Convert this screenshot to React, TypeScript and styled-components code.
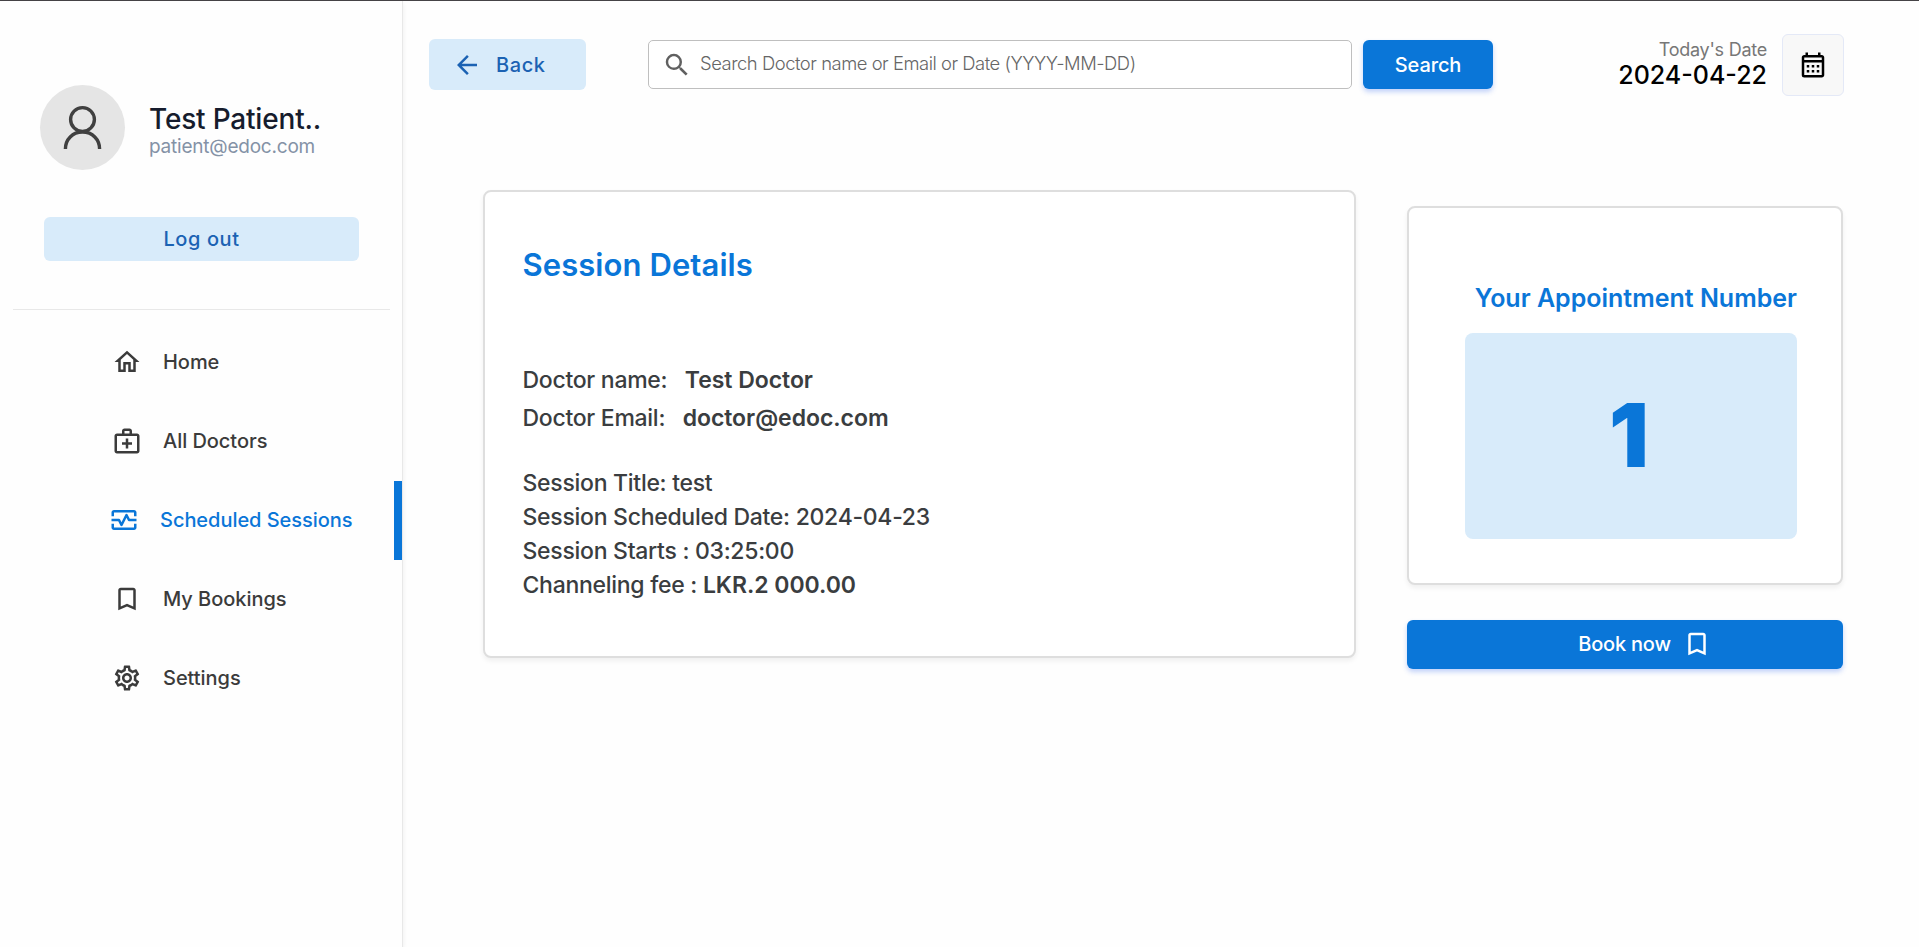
import React from "react";
import styled, { createGlobalStyle } from "styled-components";
import {
  MdArrowBack,
  MdBookmarkBorder,
  MdOutlineCalendarMonth,
  MdOutlineHome,
  MdOutlineMedicalServices,
  MdOutlineMonitorHeart,
  MdOutlineSettings,
  MdSearch,
} from "react-icons/md";

const GlobalStyle = createGlobalStyle`
  *, *::before, *::after { box-sizing: border-box; }
  body {
    margin: 0;
    background: #fff;
    font-family: Inter, "Liberation Sans", sans-serif;
    overflow: hidden;
  }
  h1, h2, p { margin: 0; font-weight: inherit; }
  button, input { font-family: inherit; }
`;

const Page = styled.div`
  display: flex;
  height: 947px;
  border-top: 1px solid #454346;
  background: #fefefe;
`;

const Sidebar = styled.aside`
  width: 403px;
  flex: none;
  display: flex;
  flex-direction: column;
  border-right: 1px solid #e8e8e8;
  box-shadow: 0 3px 5px rgba(0, 0, 0, 0.07);
`;

const Profile = styled.div`
  display: flex;
  align-items: center;
  gap: 24px;
  height: 85px;
  margin: 84px 0 0 40px;
`;

const Avatar = styled.div`
  width: 85px;
  height: 85px;
  border-radius: 50%;
  background: #e5e5e5;
`;

const ProfileText = styled.div`
  padding-top: 7px;
`;

const ProfileName = styled.p`
  font-size: 28px;
  font-weight: 500;
  line-height: 30px;
  letter-spacing: -0.19px;
  color: #161c2d;
`;

const ProfileEmail = styled.p`
  font-size: 19px;
  font-weight: 400;
  line-height: 25px;
  letter-spacing: -0.22px;
  color: #8492a6;
`;

const SoftButton = styled.button`
  display: flex;
  align-items: center;
  justify-content: center;
  border: 0;
  padding: 0;
  border-radius: 6px;
  background: #d8ebfa;
  color: #1b62b3;
  font-size: 20px;
  font-weight: 500;
  letter-spacing: 0.6px;
`;

const LogoutButton = styled(SoftButton)`
  width: 315px;
  height: 44px;
  margin: 47px 0 0 44px;
`;

const Divider = styled.div`
  height: 1px;
  margin: 48px 12px 13px 13px;
  background: #e8e8e8;
`;

const NavItem = styled.a<{ $active?: boolean }>`
  display: flex;
  align-items: center;
  gap: 21px;
  height: 79px;
  padding: 0 0 1px ${(p) => (p.$active ? 109 : 112)}px;
  border-right: ${(p) => (p.$active ? "8px solid #0a76d8" : "0")};
  color: ${(p) => (p.$active ? "#0a76d8" : "#3b3b3b")};
  font-size: 20px;
  font-weight: 500;
  letter-spacing: -0.04px;
  svg { flex: none; }
`;

const Main = styled.main`
  flex: 1;
  min-width: 0;
`;

const Header = styled.header`
  display: flex;
  align-items: flex-start;
  height: 62px;
  margin-top: 33px;
  padding-left: 26px;
`;

const BackButton = styled(SoftButton)`
  width: 157px;
  height: 51px;
  margin-top: 5px;
  justify-content: flex-start;
  gap: 14px;
  padding-left: 23px;
`;

const SearchBox = styled.label`
  display: flex;
  align-items: center;
  gap: 8px;
  width: 704px;
  height: 49px;
  margin: 6px 0 0 62px;
  padding-left: 13px;
  border: 1px solid #bfbfbf;
  border-radius: 5px;
  background: #fff;
  color: #606060;
`;

const SearchInput = styled.input`
  flex: 1;
  height: 45px;
  padding: 0 0 3px;
  border: 0;
  outline: 0;
  background: none;
  font-size: 18.4px;
  font-weight: 300;
  letter-spacing: -0.46px;
  &::placeholder { color: #666; opacity: 1; }
`;

const PrimaryButton = styled.button`
  display: flex;
  align-items: center;
  justify-content: center;
  height: 49px;
  padding: 0;
  border: 0;
  border-radius: 6px;
  background: #0a76d8;
  box-shadow: 0 3px 5px 0 rgba(57, 108, 240, 0.3);
  color: #fff;
  font-size: 20px;
  font-weight: 500;
`;

const SearchButton = styled(PrimaryButton)`
  width: 130px;
  margin: 6px 0 0 11px;
  padding-top: 1px;
  letter-spacing: -0.1px;
`;

const Today = styled.div`
  width: 274px;
  padding-top: 4px;
  text-align: right;
`;

const TodayLabel = styled.p`
  font-size: 18px;
  font-weight: 400;
  line-height: 24px;
  letter-spacing: -0.25px;
  color: #777;
`;

const TodayDate = styled.p`
  font-size: 25px;
  font-weight: 500;
  line-height: 26px;
  color: #000;
`;

const CalendarButton = styled.button`
  display: grid;
  place-items: center;
  width: 62px;
  height: 62px;
  margin-left: 15px;
  padding: 0;
  border: 1px solid #e4e9f7;
  border-radius: 6px;
  background: #f8f8f8;
  color: #000;
`;

const Content = styled.div`
  display: flex;
  align-items: flex-start;
  gap: 51px;
  margin: 94px 0 0 80px;
`;

const Card = styled.section`
  border: 2px solid #dedede;
  border-radius: 8px;
  background: #fff;
  box-shadow: 0 3px 5px rgba(0, 0, 0, 0.06);
`;

const DetailsCard = styled(Card)`
  width: 873px;
  height: 468px;
  padding: 54px 38px 0 37.5px;
  color: #3a3d40;
  font-size: 23px;
  font-weight: 500;
  letter-spacing: -0.28px;
`;

const DetailsTitle = styled.h1`
  margin-bottom: 77px;
  color: #0a76d8;
  font-size: 31px;
  font-weight: 600;
  line-height: 38px;
  letter-spacing: 0.08px;
`;

const DoctorLine = styled.p`
  line-height: 38px;
  white-space: pre;
`;

const SessionLines = styled.div`
  margin-top: 29px;
`;

const SessionLine = styled.p`
  line-height: 34px;
`;

const Strong = styled.b`
  font-weight: 600;
  letter-spacing: -0.04px;
`;

const BookingColumn = styled.div`
  width: 436px;
  margin-top: 16px;
`;

const NumberCard = styled(Card)`
  height: 379px;
  padding: 74px 44px 0 56px;
`;

const NumberTitle = styled.h2`
  color: #0a76d8;
  font-size: 25px;
  font-weight: 600;
  line-height: 32px;
  text-align: right;
  white-space: nowrap;
`;

const NumberBox = styled.div`
  display: flex;
  align-items: center;
  justify-content: center;
  width: 332px;
  height: 206px;
  margin-top: 19px;
  padding: 0 4px 3px 0;
  border-radius: 8px;
  background: #d8ebfa;
  color: #0a76d8;
  font-size: 88px;
  font-weight: 900;
`;

const BookButton = styled(PrimaryButton)`
  width: 436px;
  margin-top: 35px;
  padding: 0 0 1px 40px;
  gap: 11px;
  letter-spacing: -0.2px;
`;

const NAV = [
  { label: "Home", Icon: MdOutlineHome },
  { label: "All Doctors", Icon: MdOutlineMedicalServices },
  { label: "Scheduled Sessions", Icon: MdOutlineMonitorHeart, active: true },
  { label: "My Bookings", Icon: MdBookmarkBorder },
  { label: "Settings", Icon: MdOutlineSettings },
];

export default function App() {
  return (
    <>
      <GlobalStyle />
      <Page>
        <Sidebar>
          <Profile>
            <Avatar>
              <svg width="85" height="85" viewBox="0 0 85 85" fill="none" stroke="#404040" strokeWidth="3.4">
                <circle cx="42.5" cy="34.5" r="11.9" />
                <path d="M25.4 64C25.4 54.5 32.5 47 42.5 47S59.6 54.5 59.6 64" />
              </svg>
            </Avatar>
            <ProfileText>
              <ProfileName>Test Patient..</ProfileName>
              <ProfileEmail>patient@edoc.com</ProfileEmail>
            </ProfileText>
          </Profile>
          <LogoutButton>Log out</LogoutButton>
          <Divider />
          <nav>
            {NAV.map(({ label, Icon, active }) => (
              <NavItem key={label} $active={active}>
                <Icon size={30} />
                {label}
              </NavItem>
            ))}
          </nav>
        </Sidebar>
        <Main>
          <Header>
            <BackButton>
              <MdArrowBack size={30} />
              Back
            </BackButton>
            <SearchBox>
              <MdSearch size={30} />
              <SearchInput placeholder="Search Doctor name or Email or Date (YYYY-MM-DD)" />
            </SearchBox>
            <SearchButton>Search</SearchButton>
            <Today>
              <TodayLabel>Today's Date</TodayLabel>
              <TodayDate>2024-04-22</TodayDate>
            </Today>
            <CalendarButton aria-label="Calendar">
              <MdOutlineCalendarMonth size={30} />
            </CalendarButton>
          </Header>
          <Content>
            <DetailsCard>
              <DetailsTitle>Session Details</DetailsTitle>
              <DoctorLine>{"Doctor name:   "}<Strong>Test Doctor</Strong></DoctorLine>
              <DoctorLine>{"Doctor Email:   "}<Strong>doctor@edoc.com</Strong></DoctorLine>
              <SessionLines>
                <SessionLine>Session Title: test</SessionLine>
                <SessionLine>Session Scheduled Date: 2024-04-23</SessionLine>
                <SessionLine>Session Starts : 03:25:00</SessionLine>
                <SessionLine>Channeling fee : <Strong>LKR.2 000.00</Strong></SessionLine>
              </SessionLines>
            </DetailsCard>
            <BookingColumn>
              <NumberCard>
                <NumberTitle>Your Appointment Number</NumberTitle>
                <NumberBox>1</NumberBox>
              </NumberCard>
              <BookButton>
                Book now
                <MdBookmarkBorder size={30} />
              </BookButton>
            </BookingColumn>
          </Content>
        </Main>
      </Page>
    </>
  );
}
